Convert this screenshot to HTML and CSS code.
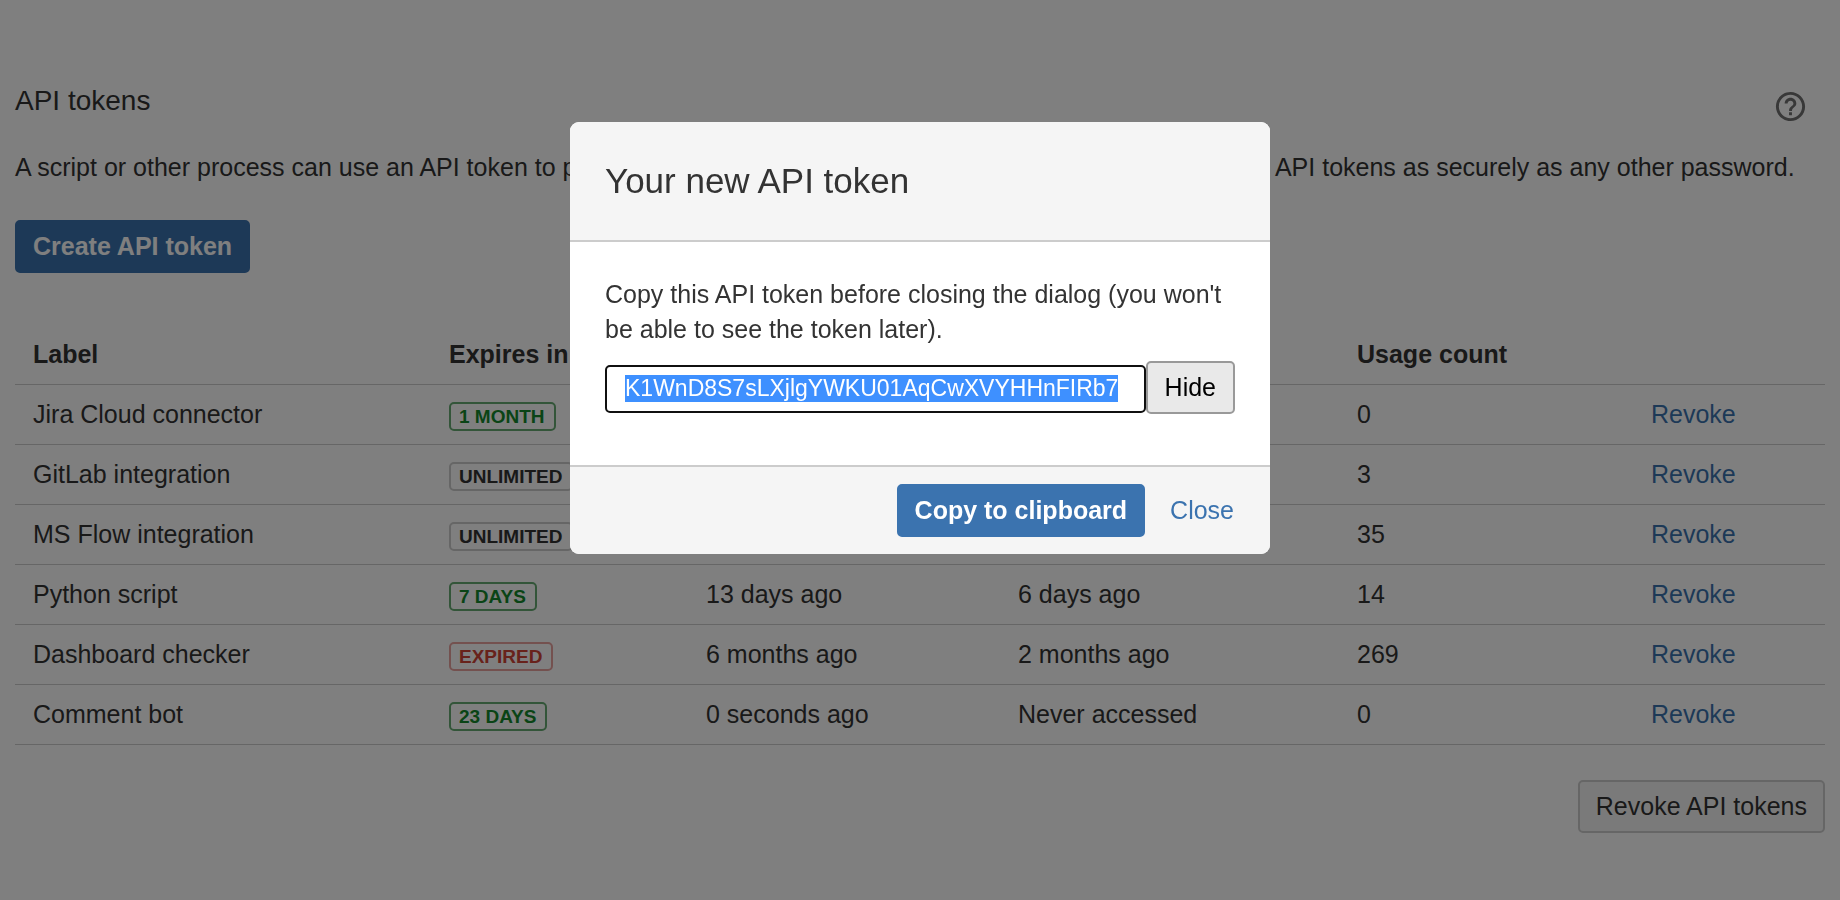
FILE: index.html
```
<!DOCTYPE html>
<html lang="en">
<head>
    <meta charset="utf-8">
    <title>API tokens</title>
    <link rel="stylesheet" href="styles.css">
</head>
<body>
    <main class="page">
        <header class="page-header">
            <h2>API tokens</h2>
            <a href="#help" class="help" aria-label="Help">
                <svg viewBox="0 0 24 24" width="35" height="35">
                    <path fill="currentColor" d="M11 18h2v-2h-2v2zm1-16C6.48 2 2 6.48 2 12s4.48 10 10 10 10-4.48 10-10S17.52 2 12 2zm0 18c-4.41 0-8-3.59-8-8s3.59-8 8-8 8 3.59 8 8-3.59 8-8 8zm0-14c-2.21 0-4 1.79-4 4h2c0-1.1.9-2 2-2s2 .9 2 2c0 2-3 1.75-3 5h2c0-2.25 3-2.5 3-5 0-2.21-1.79-4-4-4z"/>
                </svg>
            </a>
        </header>
        <p class="intro">A script or other process can use an API token to perform basic authentication with that REST API. You must treat API tokens as securely as any other password.</p>
        <button type="button" class="button primary">Create API token</button>

        <table class="tokens">
            <colgroup>
                <col class="col-label">
                <col class="col-expires">
                <col class="col-created">
                <col class="col-accessed">
                <col class="col-usage">
                <col class="col-action">
            </colgroup>
            <thead>
                <tr>
                    <th>Label</th>
                    <th>Expires in</th>
                    <th>Created</th>
                    <th>Last accessed</th>
                    <th>Usage count</th>
                    <th></th>
                </tr>
            </thead>
            <tbody>
                <tr>
                    <td>Jira Cloud connector</td>
                    <td><span class="lozenge success">1 month</span></td>
                    <td>1 month ago</td>
                    <td>1 day ago</td>
                    <td>0</td>
                    <td><a href="#revoke">Revoke</a></td>
                </tr>
                <tr>
                    <td>GitLab integration</td>
                    <td><span class="lozenge">Unlimited</span></td>
                    <td>2 months ago</td>
                    <td>9 days ago</td>
                    <td>3</td>
                    <td><a href="#revoke">Revoke</a></td>
                </tr>
                <tr>
                    <td>MS Flow integration</td>
                    <td><span class="lozenge">Unlimited</span></td>
                    <td>3 months ago</td>
                    <td>2 days ago</td>
                    <td>35</td>
                    <td><a href="#revoke">Revoke</a></td>
                </tr>
                <tr>
                    <td>Python script</td>
                    <td><span class="lozenge success">7 days</span></td>
                    <td>13 days ago</td>
                    <td>6 days ago</td>
                    <td>14</td>
                    <td><a href="#revoke">Revoke</a></td>
                </tr>
                <tr>
                    <td>Dashboard checker</td>
                    <td><span class="lozenge error">Expired</span></td>
                    <td>6 months ago</td>
                    <td>2 months ago</td>
                    <td>269</td>
                    <td><a href="#revoke">Revoke</a></td>
                </tr>
                <tr>
                    <td>Comment bot</td>
                    <td><span class="lozenge success">23 days</span></td>
                    <td>0 seconds ago</td>
                    <td>Never accessed</td>
                    <td>0</td>
                    <td><a href="#revoke">Revoke</a></td>
                </tr>
            </tbody>
        </table>

        <div class="page-actions">
            <button type="button" class="button">Revoke API tokens</button>
        </div>
    </main>

    <div class="blanket">
        <section class="dialog" role="dialog" aria-modal="true" aria-labelledby="dialog-title">
            <header class="dialog-header">
                <h1 id="dialog-title">Your new API token</h1>
            </header>
            <div class="dialog-body">
                <label for="token">Copy this API token before closing the dialog (you won't be able to see the token later).</label>
                <div class="token-row">
                    <input type="text" id="token" value="K1WnD8S7sLXjlgYWKU01AqCwXVYHHnFIRb7" readonly>
                    <button type="button" class="button toggle" id="toggle">Hide</button>
                </div>
            </div>
            <footer class="dialog-footer">
                <button type="button" class="button primary" id="copy">Copy to clipboard</button>
                <button type="button" class="button link">Close</button>
            </footer>
        </section>
    </div>

    <script>
        var token = document.getElementById("token");
        var toggle = document.getElementById("toggle");

        token.focus();
        token.select();

        toggle.onclick = function () {
            var hidden = token.type == "password";
            token.type = hidden ? "text" : "password";
            toggle.textContent = hidden ? "Hide" : "Show";
        };

        document.getElementById("copy").onclick = function () {
            token.select();
            document.execCommand("copy");
        };
    </script>
</body>
</html>
```
FILE: styles.css
```
* {
    box-sizing: border-box;
}
body {
    margin: 0;
    background: #fff;
    color: #333;
    font-family: Arial, "Liberation Sans", sans-serif;
    font-size: 25px;
    line-height: 35px;
}
h1, h2 {
    margin: 0;
    font-weight: normal;
}
h1 {
    font-size: 35px;
}
h2 {
    font-size: 28px;
}
a {
    color: #3b73af;
    text-decoration: none;
}
.page {
    padding: 83px 15px 0;
}
.page-header {
    display: flex;
    justify-content: space-between;
    align-items: flex-start;
}
.help {
    height: 35px;
    margin: 6px 17px 0 0;
    color: #707070;
}
.help svg {
    display: block;
}
.intro {
    margin: 26px 0 35px;
}

/* buttons */
.button {
    height: 53px;
    padding: 0 16px;
    border: 2px solid #ccc;
    border-radius: 5px;
    background: #f5f5f5;
    color: #333;
    font: inherit;
    cursor: pointer;
}
.button.primary {
    border-color: #3b73af;
    background: #3b73af;
    color: #fff;
    font-weight: bold;
}
.button.link {
    border-color: transparent;
    background: none;
    color: #3b73af;
}
.button.toggle {
    padding: 0 17px;
    border-color: #999;
    background: #e9e9e9;
    color: #000;
}

/* token table */
.tokens {
    width: 100%;
    margin-top: 52px;
    border-collapse: collapse;
    table-layout: fixed;
}
.tokens th,
.tokens td {
    padding: 12px 18px;
    border-bottom: 1px solid #ccc;
    text-align: left;
    white-space: nowrap;
}
.col-label {
    width: 416px;
}
.col-expires {
    width: 257px;
}
.col-created {
    width: 312px;
}
.col-accessed {
    width: 339px;
}
.col-usage {
    width: 294px;
}
.col-action {
    width: 192px;
}
.lozenge {
    display: inline-block;
    padding: 0 9px 0 8px;
    border: 2px solid #ccc;
    border-radius: 5px;
    font-size: 19px;
    font-weight: bold;
    line-height: 25px;
    text-transform: uppercase;
}
.lozenge.success {
    border-color: #67ab73;
    color: #14892c;
}
.lozenge.error {
    border-color: #e8a29f;
    color: #d04437;
}
.page-actions {
    display: flex;
    justify-content: flex-end;
    margin-top: 35px;
}

/* dialog */
.blanket {
    position: fixed;
    inset: 0;
    padding-top: 122px;
    background: rgba(0, 0, 0, 0.5);
}
.dialog {
    width: 700px;
    max-width: 100%;
    margin: 0 auto;
    border-radius: 9px;
    background: #fff;
    overflow: hidden;
}
.dialog-header {
    padding: 41px 35px 42px;
    border-bottom: 2px solid #ccc;
    background: #f5f5f5;
}
.dialog-body {
    padding: 35px 35px 51px;
}
.dialog-body label {
    display: block;
}
.token-row {
    display: flex;
    align-items: baseline;
    margin-top: 14px;
}
.token-row input {
    flex: 1;
    min-width: 0;
    height: 48px;
    padding: 0 18px;
    border: 2px solid #101010;
    border-radius: 5px;
    outline: none;
    color: #333;
    font: inherit;
    font-size: 23px;
}
.token-row input::selection {
    background: #3e90ff;
    color: #fff;
}
.dialog-footer {
    display: flex;
    justify-content: flex-end;
    gap: 7px;
    padding: 17px 18px;
    border-top: 2px solid #ccc;
    background: #f5f5f5;
}
```
